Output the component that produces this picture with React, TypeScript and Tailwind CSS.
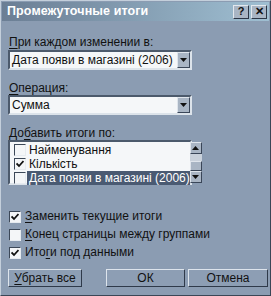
import React from "react";

const font = { fontFamily: '"Liberation Sans", Arial, sans-serif' };

function Arrow({ up }: { up?: boolean }) {
  return (
    <svg width="7" height="4" viewBox="0 0 7 4">
      {up ? <polygon points="0,4 7,4 3.5,0" fill="#111" /> : <polygon points="0,0 7,0 3.5,4" fill="#111" />}
    </svg>
  );
}

function ScrollBtn({ up, h = 12 }: { up?: boolean; h?: number }) {
  return (
    <div
      className="w-[12px] flex items-center justify-center bg-[#a9b5c4] border border-t-[#dfe5ec] border-l-[#dfe5ec] border-r-[#3a4658] border-b-[#3a4658]"
      style={{ height: h }}
    >
      <Arrow up={up} />
    </div>
  );
}

function Combo({ text }: { text: string }) {
  return (
    <div className="w-[184px] h-[20px] flex bg-[#f5f7f9] border-2 border-t-[#4c5a6c] border-l-[#4c5a6c] border-r-[#dce3ea] border-b-[#dce3ea]">
      <div className="flex-1 pl-[2px] text-[12px] leading-[16px] text-[#111]">{text}</div>
      <div className="h-[16px] w-[13px] flex items-center justify-center bg-[#a9b5c4] border border-t-[#dfe5ec] border-l-[#dfe5ec] border-r-[#3a4658] border-b-[#3a4658]">
        <Arrow />
      </div>
    </div>
  );
}

function Check({ checked }: { checked?: boolean }) {
  return (
    <div className="w-[12px] h-[12px] flex items-center justify-center bg-[#f4f6f8] border border-t-[#3c4858] border-l-[#3c4858] border-r-[#e6ebf0] border-b-[#e6ebf0]">
      {checked && (
        <svg width="8" height="8" viewBox="0 0 8 8">
          <path d="M0.5 3.5 L3 6 L7.5 1" stroke="#111" strokeWidth="1.8" fill="none" />
        </svg>
      )}
    </div>
  );
}

function U({ c }: { c: string }) {
  return <span className="underline underline-offset-2">{c}</span>;
}

function Btn({ children, w }: { children: React.ReactNode; w: number }) {
  return (
    <div
      className="flex items-center justify-center text-[12px] text-[#111] bg-[#8d9eb4] border border-t-[#dde4ec] border-l-[#dde4ec] border-r-[#2f3a4a] border-b-[#2f3a4a]"
      style={{ width: w, height: 18 }}
    >
      {children}
    </div>
  );
}

export default function App() {
  return (
    <div
      className="w-[271px] h-[296px] bg-[#8b9cb2] border border-t-[#c4cfdb] border-l-[#c4cfdb] border-r-[#3a4656] border-b-[#3a4656] flex flex-col text-[#111] overflow-hidden"
      style={font}
    >
      <div className="mx-[1px] mt-[1px] h-[19px] flex items-center pl-[5px] pr-[2px] bg-gradient-to-r from-[#6b7e94] to-[#9fbfd2]">
        <div className="flex-1 text-white font-bold text-[12.5px] tracking-[0.1px]">Промежуточные итоги</div>
        <div className="flex gap-[2px]">
          <div className="w-[16px] h-[14px] flex items-center justify-center bg-[#a9b5c4] border border-t-[#e3e8ee] border-l-[#e3e8ee] border-r-[#2c3646] border-b-[#2c3646] text-[11px] font-bold leading-none">?</div>
          <div className="w-[16px] h-[14px] flex items-center justify-center bg-[#a9b5c4] border border-t-[#e3e8ee] border-l-[#e3e8ee] border-r-[#2c3646] border-b-[#2c3646] text-[11px] font-bold leading-none">✕</div>
        </div>
      </div>

      <div className="flex flex-col pl-[7px] pt-[14px]">
        <div className="text-[12px] leading-[14px] ml-[1px]"><U c="П" />ри каждом изменении в:</div>
        <div className="mt-[1px]">
          <Combo text="Дата появи в магазині (2006)" />
        </div>

        <div className="text-[12px] leading-[14px] mt-[11px] ml-[1px]"><U c="О" />перация:</div>
        <div>
          <Combo text="Сумма" />
        </div>

        <div className="text-[12px] leading-[14px] mt-[11px] ml-[1px]">До<U c="б" />авить итоги по:</div>
        <div className="w-[184px] h-[45px] flex bg-[#f5f7f9] border-2 border-t-[#4c5a6c] border-l-[#4c5a6c] border-r-[#dce3ea] border-b-[#dce3ea]">
          <div className="flex-1 flex flex-col pt-[1px]">
            {[
              { t: "Найменування", c: false, sel: false },
              { t: "Кількість", c: true, sel: false },
              { t: "Дата появи в магазині (2006)", c: false, sel: true },
            ].map((r) => (
              <div key={r.t} className="h-[14px] flex items-center">
                <div className="w-[17px] flex justify-center pl-[2px]">
                  <Check checked={r.c} />
                </div>
                <div
                  className={`flex-1 h-[14px] pl-[2px] text-[12px] leading-[14px] whitespace-nowrap ${r.sel ? "bg-[#4a5a72] text-white" : ""}`}
                >
                  {r.t}
                </div>
              </div>
            ))}
          </div>
          <div className="w-[12px] flex flex-col bg-[#c9d1db]">
            <ScrollBtn up />
            <div className="h-[7px]" />
            <div className="h-[10px] bg-[#a9b5c4] border border-t-[#dfe5ec] border-l-[#dfe5ec] border-r-[#3a4658] border-b-[#3a4658]" />
            <div className="flex-1" />
            <ScrollBtn />
          </div>
        </div>

        <div className="mt-[25px] flex flex-col gap-[5px] ml-[1px]">
          <div className="flex items-center gap-[4px] text-[12px] leading-[13px]">
            <Check checked />
            <span><U c="З" />аменить текущие итоги</span>
          </div>
          <div className="flex items-center gap-[4px] text-[12px] leading-[13px]">
            <Check />
            <span><U c="К" />онец страницы между группами</span>
          </div>
          <div className="flex items-center gap-[4px] text-[12px] leading-[13px]">
            <Check checked />
            <span>Ито<U c="г" />и под данными</span>
          </div>
        </div>

        <div className="mt-[10px] flex">
          <Btn w={74}><span><U c="У" />брать все</span></Btn>
          <div className="ml-[24px]"><Btn w={79}>ОК</Btn></div>
          <div className="ml-[3px]"><Btn w={80}>Отмена</Btn></div>
        </div>
      </div>
    </div>
  );
}
